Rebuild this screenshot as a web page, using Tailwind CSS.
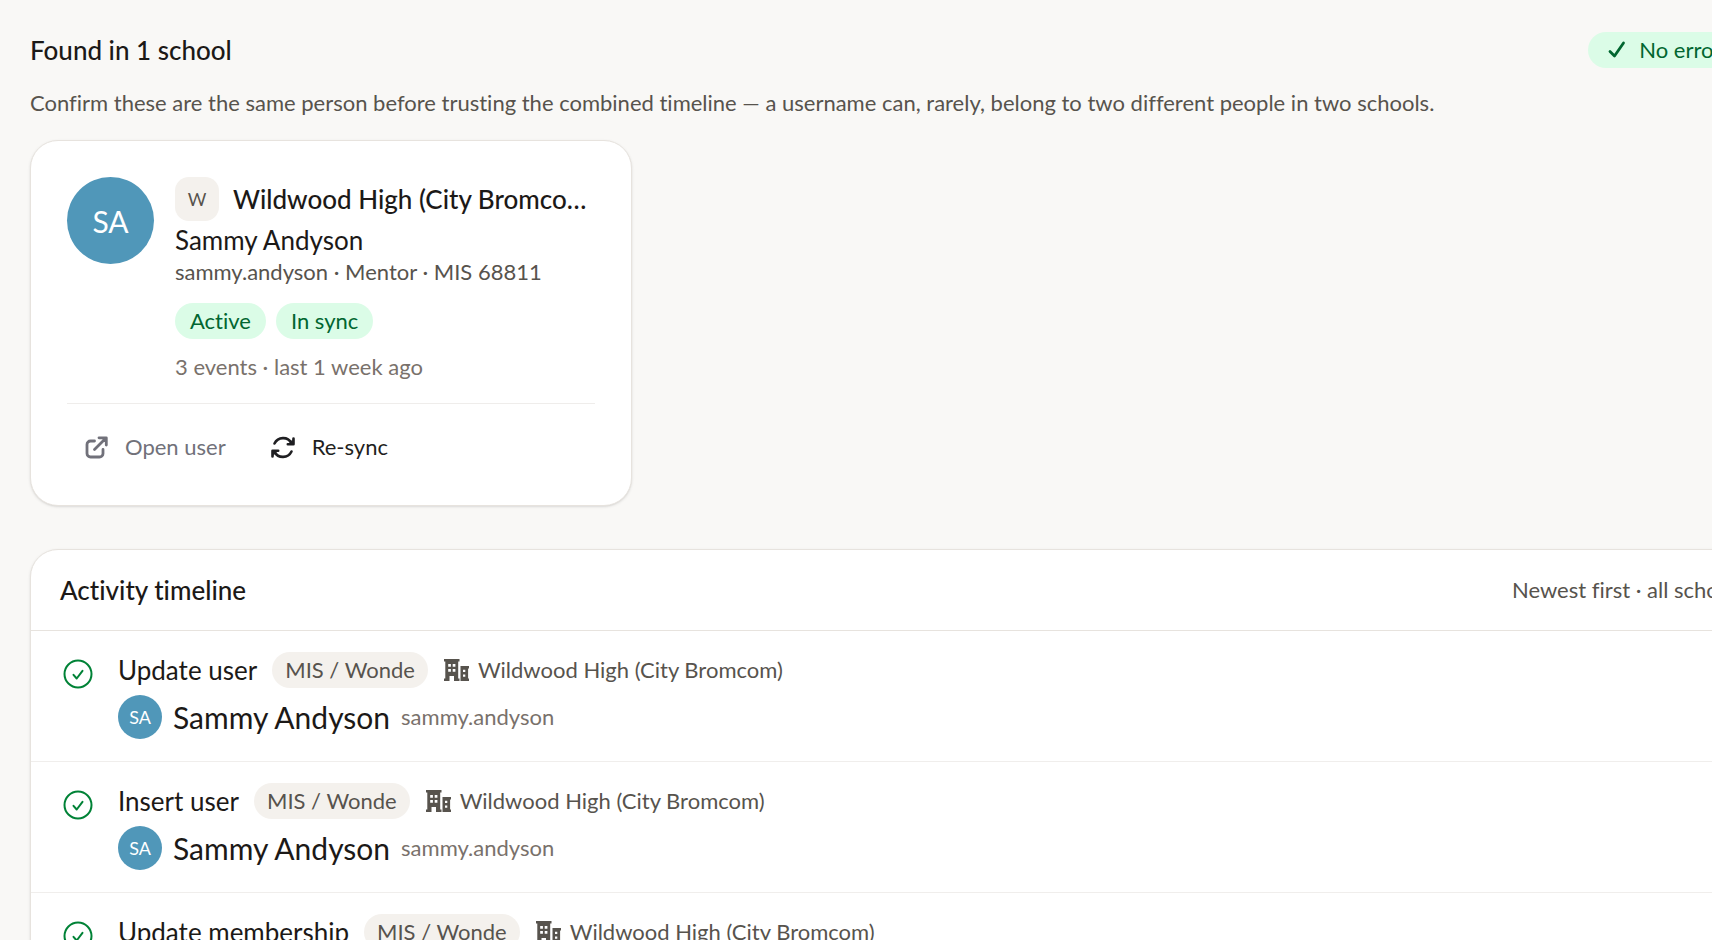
<!DOCTYPE html>
<html lang="en">
<head>
    <meta charset="UTF-8">
    <meta name="viewport" content="width=device-width, initial-scale=1.0">
    <title>User lookup - Activity timeline</title>
    <script src="https://cdn.jsdelivr.net/npm/@tailwindcss/browser@4"></script>
</head>
<body class="bg-[#f9f8f6] font-['Lato',sans-serif] text-[22px] leading-8 text-stone-900 overflow-hidden [font-variant-ligatures:no-common-ligatures]">
    <!-- Shared icons -->
    <svg class="hidden" aria-hidden="true">
        <symbol id="icon-building" viewBox="0 0 26 24">
            <path fill="currentColor" fill-rule="evenodd" d="M1 1h15.500v2.600h-1.300v16.800h1.300v2.600h-5.500v-5h-4.500v5H1v-2.600h1.300V3.600H1zM5.200 6v2.700h2.700V6zm4.500 0v2.700h2.700V6zM5.200 11v2.700h2.700V11zm4.500 0v2.700h2.700V11zM17.500 8H26v2.400h-.9v10.200h.9V23h-8.500zM20 11.800v2.200h2.300v-2.200zm0 4.700v2.200h2.300v-2.200z"/>
        </symbol>
        <symbol id="icon-check-circle" viewBox="0 0 30 30">
            <g fill="none" stroke="currentColor" stroke-width="2" stroke-linecap="round" stroke-linejoin="round">
                <circle cx="15" cy="15" r="13.500"/>
                <path d="M10.500 15.800l3.200 3.700 5.800-7.700"/>
            </g>
        </symbol>
    </svg>

    <main class="-mr-[60px] pl-[30px] pt-8">
        <header class="flex items-center justify-between pr-[27px]">
            <h1 class="text-[26px] leading-9 font-medium">Found in 1 school</h1>
            <span class="flex h-9 items-center gap-3 rounded-full bg-green-100 pl-[19px] pr-[14px] text-green-800">
                <svg class="size-5" viewBox="0 0 20 20" fill="none" stroke="currentColor" stroke-width="2.800" stroke-linecap="round" stroke-linejoin="round"><path d="M3 11.500l4.500 4.500 9-13"/></svg>
                No errors
            </span>
        </header>
        <p class="mt-[19px] text-stone-600">Confirm these are the same person before trusting the combined timeline — a username can, rarely, belong to two different people in two schools.</p>

        <section class="mt-[21px] w-[602px] rounded-[28px] border border-[#e7e3de] bg-white p-9 shadow-sm">
            <div class="flex gap-[21px]">
                <div class="flex size-[87px] shrink-0 items-center justify-center rounded-full bg-[#5097b9] text-[30px] text-white">SA</div>
                <div class="min-w-0 flex-1">
                    <div class="flex items-center gap-[14px]">
                        <span class="flex size-11 shrink-0 items-center justify-center rounded-[14px] bg-[#f4f1ed] text-[18px] text-stone-600">W</span>
                        <h2 class="truncate pr-1 text-[26px] leading-9 font-medium">Wildwood High (City Bromcom)</h2>
                    </div>
                    <p class="mt-[3px] text-[26px] leading-8">Sammy Andyson</p>
                    <p class="text-stone-600">sammy.andyson · Mentor · MIS 68811</p>
                    <div class="mt-[15px] flex gap-[10px]">
                        <span class="flex h-9 items-center rounded-full bg-green-100 px-[15px] text-green-800">Active</span>
                        <span class="flex h-9 items-center rounded-full bg-green-100 px-[15px] text-green-800">In sync</span>
                    </div>
                    <p class="mt-3 text-stone-500">3 events · last 1 week ago</p>
                </div>
            </div>
            <div class="mt-5 flex gap-[9px] border-t border-[#efedeb] pt-[21px]">
                <a href="#" class="flex h-11 items-center gap-[17px] px-[18px] text-[#71717a]">
                    <svg class="size-[23px]" viewBox="0 0 23 23" fill="none" stroke="currentColor" stroke-width="2.800" stroke-linecap="round" stroke-linejoin="round"><path d="M9.500 5H5.500A3.500 3.500 0 0 0 2 8.500v9A3.500 3.500 0 0 0 5.500 21h9a3.500 3.500 0 0 0 3.500-3.500v-4M14 1.800h7.300V9M21 2L9.500 13.500"/></svg>
                    Open user
                </a>
                <button type="button" class="flex h-11 cursor-pointer items-center gap-[17px] px-[18px] text-[#1f1f22]">
                    <svg class="h-[23px] w-6" viewBox="0 0 24 23" fill="none" stroke="currentColor" stroke-width="2.600" stroke-linecap="round" stroke-linejoin="round"><path d="M3.500 7.500A9.600 9.600 0 0 1 20.500 7M20.500 15.500A9.600 9.600 0 0 1 3.500 16M22.500 2.500V8.200H16.800M1.500 20.500V14.800H7.200"/><path fill="currentColor" stroke-width="1" d="M22.500 3.500V8.200H17.800zM1.500 19.500V14.800H6.200z"/></svg>
                    Re-sync
                </button>
            </div>
        </section>

        <section class="mt-[43px] rounded-[28px] border border-[#e7e3de] bg-white shadow-sm">
            <header class="flex h-[81px] items-center justify-between border-b border-[#e7e3de] pl-[29px] pr-[25px]">
                <h2 class="text-[26px] leading-9 font-medium">Activity timeline</h2>
                <p class="text-stone-600">Newest first · all schools</p>
            </header>
            <ul class="divide-y divide-[#f0eeec]">
                <li class="flex gap-[25px] px-8 pt-[21px] pb-[22px]">
                    <svg class="mt-[7px] size-[30px] shrink-0 text-green-700"><use href="#icon-check-circle"/></svg>
                    <div class="grid gap-[7px]">
                        <div class="flex items-center gap-[15px]">
                            <h3 class="text-[26px] leading-9">Update user</h3>
                            <span class="flex h-9 items-center rounded-full bg-[#f4f1ed] px-[13px] text-stone-600">MIS / Wonde</span>
                            <span class="flex items-center gap-[9px] text-stone-600">
                                <svg class="h-6 w-[26px]"><use href="#icon-building"/></svg>
                                Wildwood High (City Bromcom)
                            </span>
                        </div>
                        <div class="flex items-center gap-[11px]">
                            <span class="flex size-11 items-center justify-center rounded-full bg-[#5097b9] text-[18px] text-white">SA</span>
                            <span class="text-[30px]">Sammy Andyson</span>
                            <span class="text-stone-500">sammy.andyson</span>
                        </div>
                    </div>
                </li>
                <li class="flex gap-[25px] px-8 pt-[21px] pb-[22px]">
                    <svg class="mt-[7px] size-[30px] shrink-0 text-green-700"><use href="#icon-check-circle"/></svg>
                    <div class="grid gap-[7px]">
                        <div class="flex items-center gap-[15px]">
                            <h3 class="text-[26px] leading-9">Insert user</h3>
                            <span class="flex h-9 items-center rounded-full bg-[#f4f1ed] px-[13px] text-stone-600">MIS / Wonde</span>
                            <span class="flex items-center gap-[9px] text-stone-600">
                                <svg class="h-6 w-[26px]"><use href="#icon-building"/></svg>
                                Wildwood High (City Bromcom)
                            </span>
                        </div>
                        <div class="flex items-center gap-[11px]">
                            <span class="flex size-11 items-center justify-center rounded-full bg-[#5097b9] text-[18px] text-white">SA</span>
                            <span class="text-[30px]">Sammy Andyson</span>
                            <span class="text-stone-500">sammy.andyson</span>
                        </div>
                    </div>
                </li>
                <li class="flex gap-[25px] px-8 pt-[21px] pb-[22px]">
                    <svg class="mt-[7px] size-[30px] shrink-0 text-green-700"><use href="#icon-check-circle"/></svg>
                    <div class="grid gap-[7px]">
                        <div class="flex items-center gap-[15px]">
                            <h3 class="text-[26px] leading-9">Update membership</h3>
                            <span class="flex h-9 items-center rounded-full bg-[#f4f1ed] px-[13px] text-stone-600">MIS / Wonde</span>
                            <span class="flex items-center gap-[9px] text-stone-600">
                                <svg class="h-6 w-[26px]"><use href="#icon-building"/></svg>
                                Wildwood High (City Bromcom)
                            </span>
                        </div>
                        <div class="flex items-center gap-[11px]">
                            <span class="flex size-11 items-center justify-center rounded-full bg-[#5097b9] text-[18px] text-white">SA</span>
                            <span class="text-[30px]">Sammy Andyson</span>
                            <span class="text-stone-500">sammy.andyson</span>
                        </div>
                    </div>
                </li>
            </ul>
        </section>
    </main>
</body>
</html>
